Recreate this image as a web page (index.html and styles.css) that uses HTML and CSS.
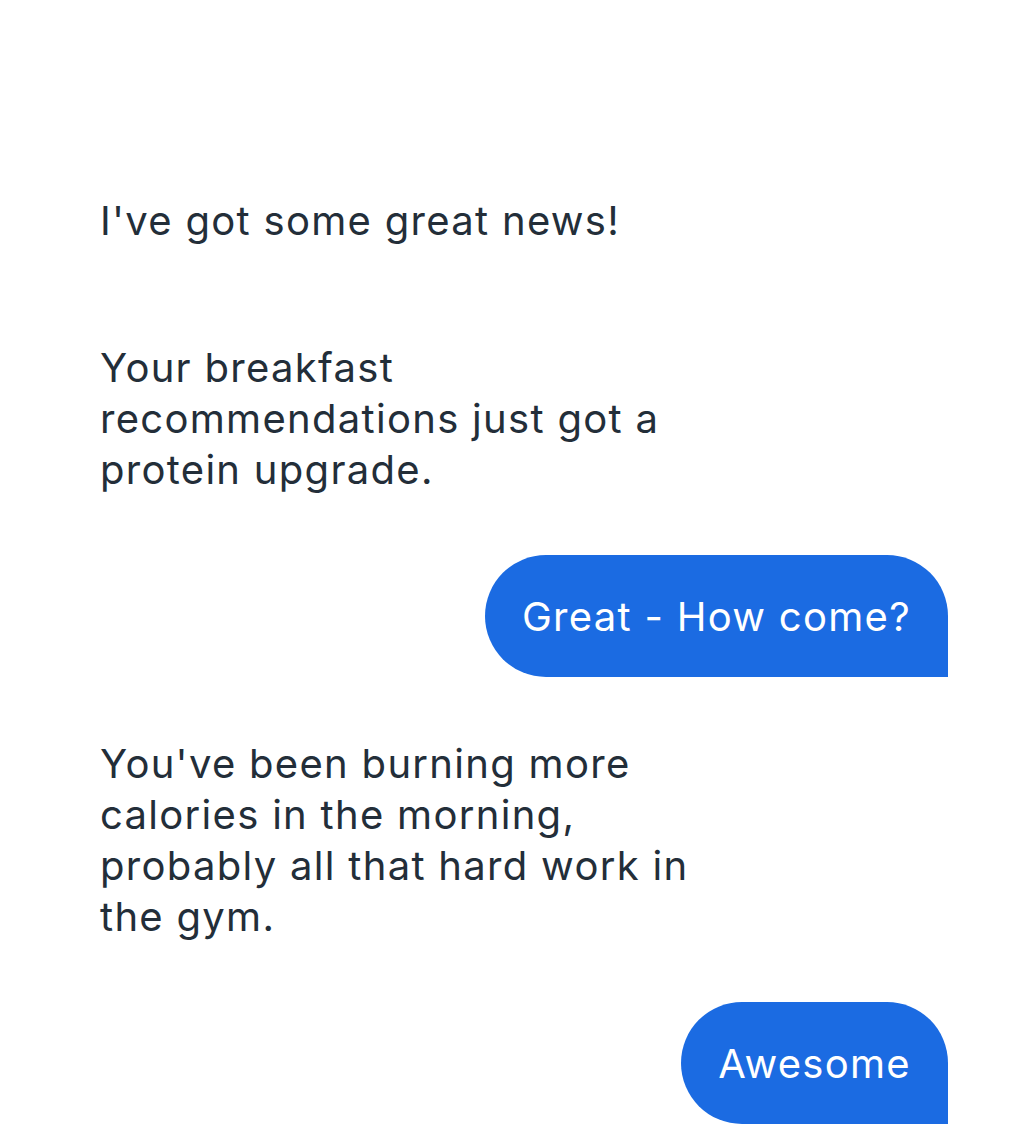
FILE: index.html
```html
<!DOCTYPE html>
<html lang="en">
<head>
<meta charset="utf-8">
<title>Chat</title>
<link rel="stylesheet" href="styles.css">
</head>
<body>
<main class="chat">
  <div class="msg msg-in">I've got some great news!</div>
  <div class="msg msg-in">Your breakfast recommendations just got a protein upgrade.</div>
  <div class="msg msg-out">Great - How come?</div>
  <div class="msg msg-in">You've been burning more calories in the morning, probably all that hard work in the gym.</div>
  <div class="msg msg-out">Awesome</div>
</main>
</body>
</html>
```

FILE: styles.css
```css
html, body {
  margin: 0;
  padding: 0;
  background: #ffffff;
}

body {
  font-family: "Inter", "Noto Sans", "Liberation Sans", sans-serif;
  -webkit-font-smoothing: antialiased;
}

.chat {
  display: flex;
  flex-direction: column;
  gap: 25px;
  padding: 159px 63px 40px 63px;
}

.msg {
  font-size: 40px;
  font-weight: 400;
  line-height: 51px;
  letter-spacing: 1.3px;
  padding: 35.5px 37px;
  box-sizing: border-box;
}

.msg-in {
  align-self: flex-start;
  max-width: 684px;
  color: #232e39;
}

.msg-out {
  align-self: flex-end;
  background: #1b6be2;
  color: #ffffff;
  border-radius: 61px 61px 0 61px;
  white-space: nowrap;
}
```
